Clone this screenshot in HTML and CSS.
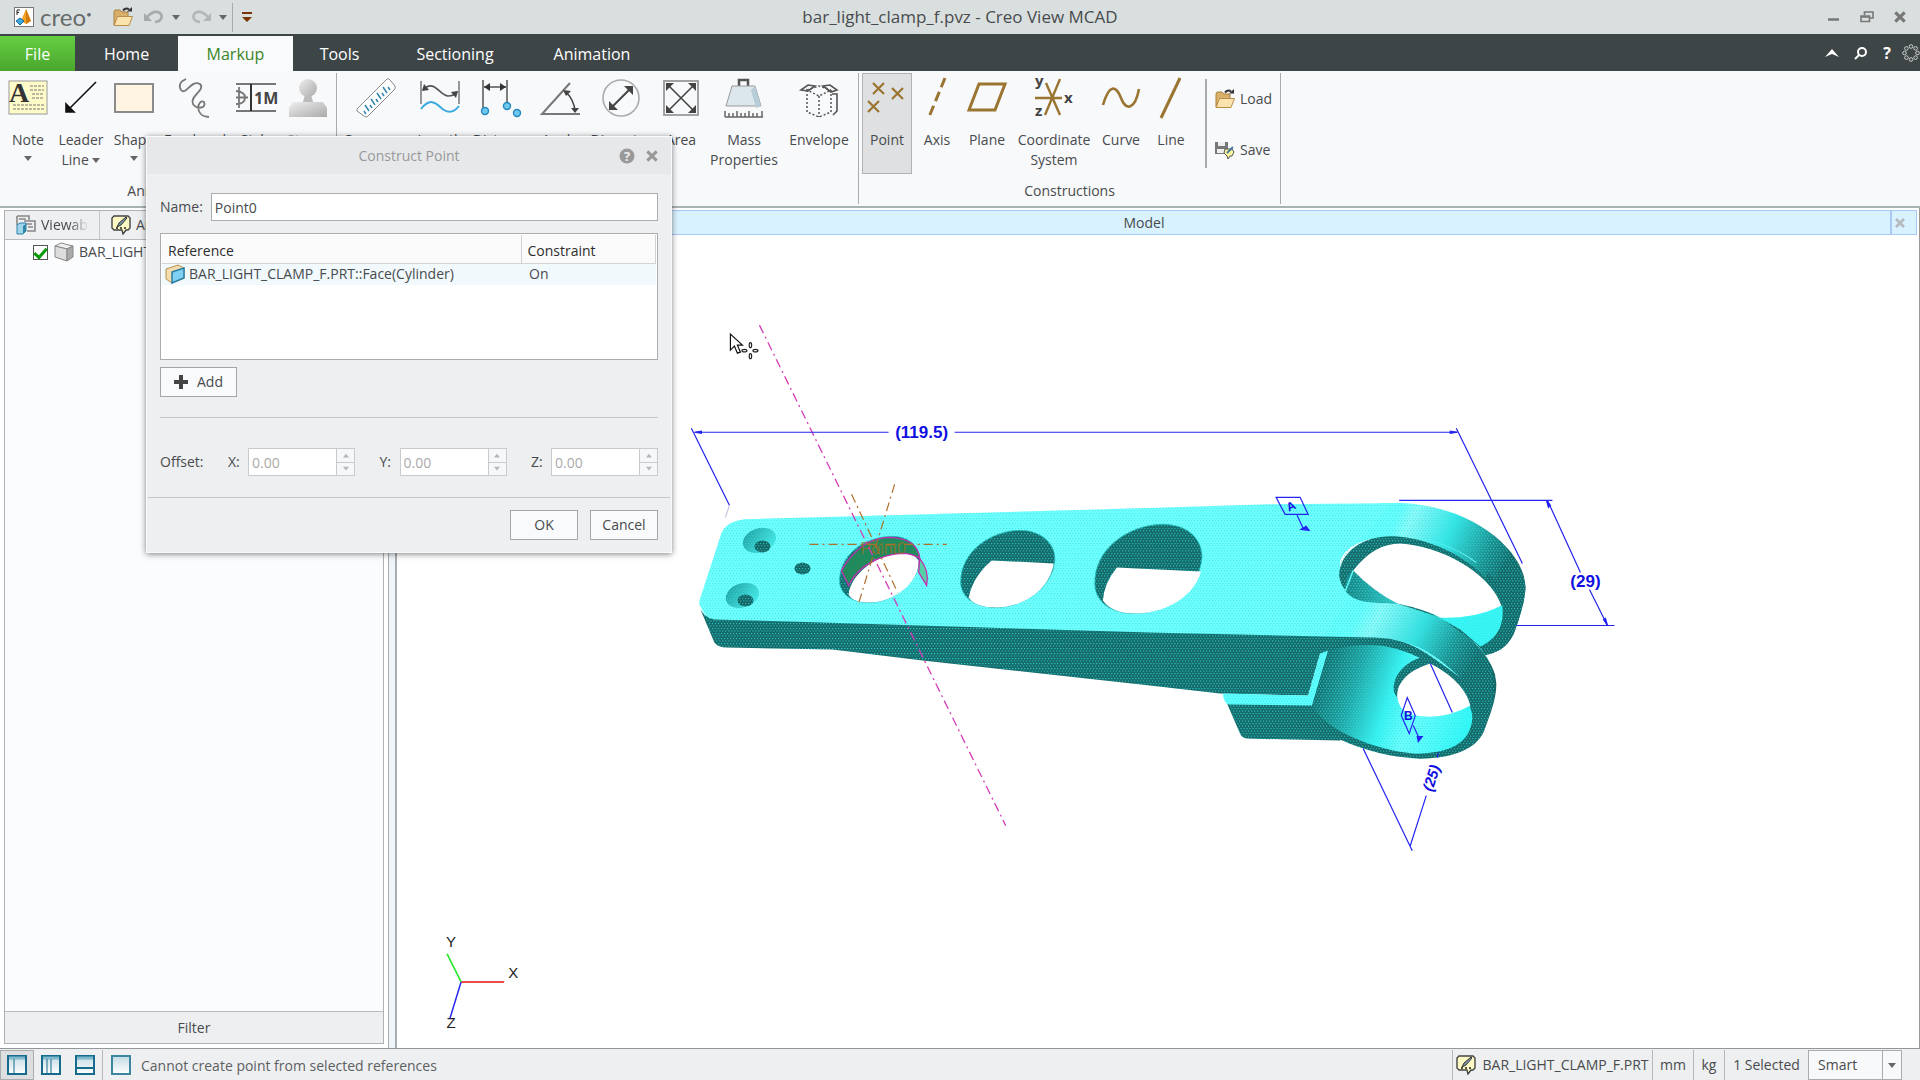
FILE: index.html
```html
<!DOCTYPE html>
<html lang="en">
<head>
<meta charset="utf-8">
<title>bar_light_clamp_f.pvz - Creo View MCAD</title>
<link rel="stylesheet" href="styles.css">
</head>
<body>
<svg class="defs" aria-hidden="true">
  <symbol id="i-folder" viewBox="0 0 20 20">
    <path d="M1 18V5l1-2h5l2 2h6v4" fill="#d9b06a" stroke="#a9803f"/>
    <path d="M1 18.500L4.500 9.500H19.500L16 18.500Z" fill="#fbe3ae" stroke="#b98c48"/>
    <path d="M10 3.500Q13 0 16 2.500" fill="none" stroke="#333" stroke-width="2"/><path d="M14 4.500H19V0Z" fill="#333"/>
  </symbol>
  <symbol id="i-note" viewBox="0 0 20 20">
    <path d="M3 1h14l2 2v10l-2 2h-2l-3 4-1-4H3l-2-2V3z" fill="#fdf9c4" stroke="#444" stroke-width="1.400"/>
    <path d="M6 12l2-4 7-6 1 1-6 7z" fill="#7d95a5" stroke="#333"/><path d="M5 13h2M9 13h2M13 13h2" stroke="#222" stroke-width="1.500"/>
  </symbol>
  <symbol id="i-x" viewBox="0 0 12 12"><path d="M2 2l8 8M10 2l-8 8" stroke="currentColor" stroke-width="2.600" fill="none"/></symbol>
  <symbol id="i-down" viewBox="0 0 8 5"><path d="M0 0h8L4 5z" fill="currentColor"/></symbol>
  <symbol id="i-up" viewBox="0 0 8 5"><path d="M0 5h8L4 0z" fill="currentColor"/></symbol>
  <linearGradient id="paneFill" x2="0" y2="1"><stop offset="0" stop-color="#c3dbe4"/><stop offset="1" stop-color="#fff"/></linearGradient>
  <linearGradient id="gray" x2="1" y2="1"><stop offset="0" stop-color="#eee"/><stop offset="1" stop-color="#aaa"/></linearGradient>
</svg>

<header class="titlebar">
  <svg class="logo" viewBox="0 0 20 20"><rect x=".500" y=".500" width="19" height="19" fill="#fff" stroke="#777"/><path d="M12 2L7 14l5 3 5-3z" fill="#f4a020"/><path d="M12 2v15l5-3z" fill="#d47a0c"/><path d="M6 11l4 3-4 4-4-4z" fill="#3aa7e0" stroke="#17699b"/><path d="M3 3v5M3 3h3M3 5.500h2" stroke="#222"/></svg>
  <span class="brand">creo<sup>•</sup></span>
  <button class="tb open" aria-label="Open"><svg class="ic20"><use href="#i-folder"/></svg></button>
  <button class="tb undo" aria-label="Undo"><svg class="ic20" viewBox="0 0 20 20"><path d="M3 10Q8 4 14 5Q19 7 17 12Q15 15 11 15" fill="none" stroke="#a6aaaa" stroke-width="2.600"/><path d="M0 6v8h8z" fill="#a6aaaa"/></svg></button>
  <svg class="caret"><use href="#i-down"/></svg>
  <button class="tb redo" aria-label="Redo"><svg class="ic20" viewBox="0 0 20 20"><path d="M17 10Q12 4 6 5Q1 7 3 12Q5 15 9 15" fill="none" stroke="#b2b7b7" stroke-width="2.600"/><path d="M20 6v8h-8z" fill="#b2b7b7"/></svg></button>
  <svg class="caret"><use href="#i-down"/></svg>
  <span class="tsep"></span>
  <button class="tb custom" aria-label="Customize toolbar"><svg width="10" height="10" viewBox="0 0 10 10"><path d="M0 0h10v2H0zM0 5h10L5 10z" fill="#7a3508"/></svg></button>
  <h1 class="title">bar_light_clamp_f.pvz - Creo View MCAD</h1>
  <div class="winbtns">
    <button aria-label="Minimize"><svg width="14" height="14"><path d="M1 9.500h11" stroke="#777" stroke-width="2.500"/></svg></button>
    <button aria-label="Restore"><svg width="14" height="14" fill="none" stroke="#777" stroke-width="1.600"><path d="M4.500 5V2h8.500v6H10M1 6h8.500v5.500H1zM1 7h8.500"/></svg></button>
    <button aria-label="Close"><svg width="14" height="14" class="gx"><use href="#i-x"/></svg></button>
  </div>
</header>

<nav class="tabs">
  <a class="file" href="#">File</a><a class="home" href="#">Home</a><a class="on" href="#">Markup</a><a class="t4" href="#">Tools</a><a class="t5" href="#">Sectioning</a><a class="t6" href="#">Animation</a>
  <div class="navicons">
    <button aria-label="Collapse ribbon"><svg width="14" height="8"><path d="M0 8L7 0l7 8-7-3z" fill="#fff"/></svg></button>
    <button aria-label="Search"><svg width="14" height="14" fill="none" stroke="#fff" stroke-width="2"><circle cx="8" cy="6" r="4"/><path d="M5 9l-4 4"/></svg></button>
    <button aria-label="Help" class="q">?</button>
    <button aria-label="Account"><svg width="18" height="18" fill="none" stroke="#ccc" stroke-width="1"><circle cx="9" cy="2.500" r="1.800"/><circle cx="13.600" cy="4.400" r="1.800"/><circle cx="15.500" cy="9" r="1.800"/><circle cx="13.600" cy="13.600" r="1.800"/><circle cx="9" cy="15.500" r="1.800"/><circle cx="4.400" cy="13.600" r="1.800"/><circle cx="2.500" cy="9" r="1.800"/><circle cx="4.400" cy="4.400" r="1.800"/></svg></button>
  </div>
</nav>

<section class="ribbon">
  <div class="group g1">
    <div class="items">
      <button class="rb w54"><svg viewBox="0 0 40 40"><rect x="1" y="3" width="38" height="33" fill="#fffbc8" stroke="#999"/><text x="1" y="24" class="bigA">A</text><path d="M22 8h14M22 12h14M24 16h12M24 20h12M5 27h31M5 31h31" stroke="#777" stroke-dasharray="3 1"/></svg><span>Note</span><svg class="caret"><use href="#i-down"/></svg></button>
      <button class="rb w52"><svg viewBox="0 0 40 40" stroke="#111" stroke-width="1.600"><path d="M35 4L6 33" fill="none"/><path d="M5 34V26L13 34z" fill="#111"/></svg><span>Leader<br>Line <svg class="caret"><use href="#i-down"/></svg></span></button>
      <button class="rb w54"><svg viewBox="0 0 40 40"><rect x="1" y="6" width="38" height="28" fill="#fff3e2" stroke="#8b8b8b" stroke-width="2"/></svg><span>Shape</span><svg class="caret"><use href="#i-down"/></svg></button>
      <button class="rb w68"><svg viewBox="0 0 40 40" fill="none" stroke="#777" stroke-width="1.800"><path d="M11 1Q2 5 6 12C11 18 16 1 25 6C31 12 14 18 18 26C22 32 32 30 29 24C23 20 18 38 34 39"/></svg><span>Freehand<br>Line</span></button>
      <button class="rb w54"><svg viewBox="0 0 40 40" fill="none" stroke="#777"><path d="M0 6h40M0 33h40" stroke-width="2"/><path d="M15 6v27" stroke="#333" stroke-width="2"/><path d="M3 9v21M0 19.500h12M0 13Q9 14 9 19.500Q9 26 0 26" stroke-width="1.800"/><text x="18" y="26" class="onem">1M</text></svg><span>Style</span></button>
      <button class="rb w50 off"><svg viewBox="0 0 40 40"><circle cx="20" cy="10" r="9" fill="url(#gray)"/><path d="M17 17h6l3 10H14z" fill="#bbb"/><path d="M5 24h30l4 6v9H1V30z" fill="url(#gray)"/></svg><span>Stamp</span></button>
    </div>
    <div class="cap">Annotations</div>
  </div>
  <div class="group g2">
    <div class="items">
      <button class="rb w68"><svg viewBox="0 0 40 40"><path d="M1 31L31 1Q33 0 34 2L39 8Q40 10 38 12L12 38Q10 40 8 38L1 33z" fill="#fff" stroke="#888"/><path d="M10 36l-2-3M13 33l-4-6M16 30l-2-3M19 27l-4-6M22 24l-2-3M25 21l-4-6M28 18l-2-3M31 15l-4-6M34 12l-2-3" stroke="#3286ad" stroke-width="1.500"/></svg><span>Summary</span></button>
      <button class="rb w60"><svg viewBox="0 0 40 40" fill="none"><path d="M1 3v23M39 3v23" stroke="#777" stroke-width="1.500"/><path d="M3 12C14 0 20 18 28 18Q34 18 37 14" stroke="#555" stroke-width="1.600"/><path d="M2 13l2-7 5 6zM38 13l-2 7-5-6z" fill="#444"/><path d="M1 31C12 17 18 28 24 32Q32 37 39 28" stroke="#39a9e0" stroke-width="2"/></svg><span>Length</span></button>
      <button class="rb w62"><svg viewBox="0 0 40 40" fill="none"><path d="M2 2v28M26 2v22M3 9h22" stroke="#555" stroke-width="1.500"/><path d="M3 9l6-4v8zM25 9l-6-4v8z" fill="#333"/><g fill="#6fc9ef" stroke="#2389bd" stroke-width="1.400"><circle cx="4" cy="33" r="3.500"/><circle cx="26" cy="28" r="3.500"/><circle cx="36" cy="35" r="3.500"/></g></svg><span>Distance</span></button>
      <button class="rb w56"><svg viewBox="0 0 40 40" fill="none" stroke="#777" stroke-width="2"><path d="M30 5L2 36H40"/><path d="M26 14Q34 22 35 33" stroke="#444" stroke-width="1.600"/><path d="M23 12l8 1-5 5zM31 30h8l-4 5z" fill="#444" stroke="none"/></svg><span>Angle</span></button>
      <button class="rb w66"><svg viewBox="0 0 40 40"><circle cx="20" cy="20" r="18" fill="none" stroke="#aaa" stroke-width="1.600"/><path d="M11 29L29 11" stroke="#444" stroke-width="2"/><path d="M8 32v-9l9 9zM32 8v9l-9-9z" fill="#444"/></svg><span>Diameter</span></button>
      <button class="rb w54"><svg viewBox="0 0 40 40"><rect x="3" y="3" width="34" height="34" fill="none" stroke="#999" stroke-width="1.800"/><path d="M6 6l28 28M34 6L6 34" stroke="#444" stroke-width="1.600"/><path d="M5 5h8l-8 8zM35 5v8l-8-8zM5 35v-8l8 8zM35 35h-8l8-8z" fill="#444"/></svg><span>Area</span></button>
      <button class="rb w72"><svg viewBox="0 0 40 40"><path d="M15 8V2h9v6" fill="none" stroke="#555" stroke-width="2.500"/><path d="M8 8h23l6 20H2z" fill="#dbe7ed" stroke="#999"/><path d="M31 8l6 20-5 2-5-18z" fill="#b6cdd8"/><path d="M1 39h38M1 39v-6M5 39v-4M9 39v-4M13 39v-6M17 39v-4M21 39v-4M25 39v-6M29 39v-4M33 39v-4M38 39v-6" stroke="#666" stroke-width="1.500" fill="none"/></svg><span>Mass<br>Properties</span></button>
      <button class="rb w76"><svg viewBox="0 0 40 40" fill="none" stroke="#555"><path d="M8 12v22l12 5 12-5V12L20 18zM20 18v21M8 12l12-4 12 4" stroke-width="1.500" stroke-dasharray="2 2"/><path d="M2 12l7-5 7 1-7 5zM24 8l7-1 7 5-6 2zM33 16h5v17l-4 4" stroke-width="1.600"/></svg><span>Envelope</span></button>
    </div>
    <div class="cap">Measure</div>
  </div>
  <div class="group g3">
    <div class="items">
      <button class="rb w50 pressed"><svg viewBox="0 0 40 40" stroke="#9a7431" stroke-width="2.200"><path d="M6 5l11 11M17 5L6 16M25 10l11 11M36 10L25 21M1 23l11 11M12 23L1 34"/></svg><span>Point</span></button>
      <button class="rb w50"><svg viewBox="0 0 40 40"><path d="M28 0L12 39" stroke="#9a7431" stroke-width="3" stroke-dasharray="10 5"/></svg><span>Axis</span></button>
      <button class="rb w50"><svg viewBox="0 0 40 40"><path d="M12 6h26L28 32H2z" fill="none" stroke="#9a7431" stroke-width="3"/></svg><span>Plane</span></button>
      <button class="rb w84"><svg viewBox="0 0 40 40"><path d="M1 20h27M12 5l14 32M26 1L11 37" stroke="#9a7431" stroke-width="2.400"/><text x="1" y="8" class="axl">y</text><text x="30" y="25" class="axl">x</text><text x="1" y="38" class="axl">z</text></svg><span>Coordinate<br>System</span></button>
      <button class="rb w50"><svg viewBox="0 0 40 40"><path d="M2 27C8 6 15 7 20 20S34 32 38 11" fill="none" stroke="#9a7431" stroke-width="2.600"/></svg><span>Curve</span></button>
      <button class="rb w50"><svg viewBox="0 0 40 40"><path d="M29 0L10 40" stroke="#9a7431" stroke-width="3"/></svg><span>Line</span></button>
      <div class="side">
        <button><svg class="ic20"><use href="#i-folder"/></svg>Load</button>
        <button><svg class="ic20" viewBox="0 0 20 20"><path d="M0 2h13v12H0z" fill="#777"/><path d="M3 2h7v4H3zM2 9h9v4H2z" fill="#eee"/><path d="M10 9h7l2 3-2 4h-2l-2 3-1-3-3-3z" fill="#fbf5a0" stroke="#555"/><path d="M12 13l6-6" stroke="#4a7a99" stroke-width="2"/></svg>Save</button>
      </div>
    </div>
    <div class="cap">Constructions</div>
  </div>
</section>

<main class="work">
  <aside class="panel">
    <div class="ptabs">
      <button class="pt"><svg class="ic20" viewBox="0 0 20 20"><path d="M1 1h12v4M1 1v9M3 4h7M8 6h11v10h-8M10 9h6M12 12h5" fill="none" stroke="#888" stroke-width="1.600"/><path d="M1 10l3-2h6v8l-3 3H1z" fill="#9fd4ea" stroke="#2a83a8"/><path d="M7 11l3-2v7l-3 3z" fill="#2e86ab"/></svg><span class="fade">Viewables</span></button>
      <button class="pt"><svg class="ic20"><use href="#i-note"/></svg><span>Annotations</span></button>
    </div>
    <div class="tree">
      <label class="node"><input type="checkbox" checked><svg class="ic20" viewBox="0 0 20 20"><path d="M1 4l6-3 12 3-6 3z" fill="#eee" stroke="#888"/><path d="M1 4l12 3v12L1 15z" fill="#ddd" stroke="#888"/><path d="M13 7l6-3v11l-6 4z" fill="#aaa" stroke="#888"/></svg>BAR_LIGHT_CLAMP_F.PRT</label>
    </div>
    <button class="filter">Filter</button>
  </aside>
  <div class="split"></div>
  <section class="view">
    <div class="vhead"><h2>Model</h2><button aria-label="Close view"><svg width="12" height="12"><use href="#i-x"/></svg></button></div>
    <svg class="scene" viewBox="398 235 1521 812" preserveAspectRatio="xMinYMin slice" role="img" aria-label="Clamp part model">
      <defs>
        <pattern id="dots" width="3" height="5" patternUnits="userSpaceOnUse"><path d="M0 0h1v1H0zM1.500 2.500h1v1h-1z" fill="#35dede"/></pattern>
        <linearGradient id="back" gradientUnits="userSpaceOnUse" x1="1395" y1="520" x2="1505" y2="570"><stop offset="0" stop-color="#68ffff"/><stop offset=".120" stop-color="#90fafa"/><stop offset=".450" stop-color="#35e6e6"/><stop offset=".800" stop-color="#1c9090"/><stop offset="1" stop-color="#146868"/></linearGradient>
        <linearGradient id="front" gradientUnits="userSpaceOnUse" x1="1360" y1="610" x2="1470" y2="668"><stop offset="0" stop-color="#68ffff"/><stop offset=".150" stop-color="#90fafa"/><stop offset=".500" stop-color="#35e0e0"/><stop offset=".800" stop-color="#1c9090"/><stop offset="1" stop-color="#146868"/></linearGradient>
        <linearGradient id="bore" gradientUnits="userSpaceOnUse" x1="1325" y1="670" x2="1472" y2="720"><stop offset="0" stop-color="#157070"/><stop offset=".200" stop-color="#1fa0a0"/><stop offset=".450" stop-color="#38f4f4"/><stop offset=".620" stop-color="#70ffff"/><stop offset="1" stop-color="#30f8f8"/></linearGradient>
        <linearGradient id="inner" x2="1"><stop offset="0" stop-color="#158080"/><stop offset="1" stop-color="#30c8c8"/></linearGradient>
        <linearGradient id="sink" x2="1" y2="1"><stop offset="0" stop-color="#1c9a9a"/><stop offset="1" stop-color="#50f4f4"/></linearGradient>
        <linearGradient id="edge" gradientUnits="userSpaceOnUse" x1="0" y1="618" x2="2" y2="650"><stop offset="0" stop-color="#40d8d8"/><stop offset=".350" stop-color="#156a6a"/></linearGradient>
      </defs>
      <path d="M1380 503H1400C1470 504 1525 550 1525 587C1525 600 1517 624 1513 634C1507 645 1500 652 1482 655L1350 620Z" fill="url(#back)"/>
      <path d="M1503 555C1520 568 1525 580 1525 587C1525 600 1517 624 1513 634C1507 645 1500 652 1482 655L1470 640 1490 560Z" fill="#146868"/>
      <path d="M1227 703L1240 733Q1242 738 1248 738L1340 740 1370 700Z" fill="#156a6a"/>
      <path d="M1323 636L1400 603C1430 608 1445 620 1460 629C1482 646 1496 668 1496 684C1496 700 1488 718 1484 730C1475 752 1445 758 1420 758C1390 757 1365 750 1340 739L1312 705Z" fill="#146868"/>
      <path d="M700 604L710 622 823 630 1323 642 1380 638C1410 638 1430 655 1460 677L1490 665C1480 640 1450 614 1397 603L1380 595 1340 575V560Q1350 538 1390 536Q1440 536 1475 562L1505 560C1480 525 1430 503 1395 503L1270 504 1140 508 745 519Q727 521 722 533L700 600Z" fill="#70ffff"/>
      <path d="M1390 503H1400C1450 504 1490 530 1508 554L1495 580C1475 555 1440 536 1390 536Q1370 536 1358 543Z" fill="url(#back)"/>
      <path d="M1350 595L1397 603C1450 614 1485 644 1495 675L1485 700C1450 670 1430 640 1380 638L1323 637Z" fill="url(#front)"/>
      <path d="M699 604L715 642Q719 647 727 647L833 649 923 660 1150 685 1220 693 1308 695 1320 653 1328 650Q1353 643 1380 645L1430 662C1410 640 1390 637 1370 637L1323 636 1150 632 823 622 715 619Q703 617 699 604Z" fill="url(#edge)"/>
      <path d="M1320 653L1328 650 1312 705 1228 704Q1223 701 1223 693L1308 695Z" fill="#60ffff"/>
      <path d="M1328 650Q1353 643 1380 645C1430 652 1471 690 1472 717C1471 742 1450 753 1415 753C1375 750 1325 730 1312 705Z" fill="url(#bore)"/>
      <path d="M1420 657C1400 664 1391 680 1394 692L1402 706 1440 680 1432 662Z" fill="#156a6a"/>
      <path d="M1430 663C1405 671 1396 684 1397 697Q1399 708 1407 713Q1440 722 1470 705C1466 688 1450 673 1430 663Z" fill="#fff"/>
      <path d="M1339 575C1340 550 1365 536 1390 536C1440 536 1503 575 1502 616C1501 632 1493 641 1480 646L1440 617 1397 603C1370 602 1342 600 1339 575Z" fill="#156a6a"/>
      <path d="M1353 570C1345 577 1344 582 1345 590Q1352 601 1373 602L1397 603 1373 588Z" fill="url(#inner)"/>
      <path d="M1353 570L1345 591" stroke="#68ffff" stroke-width="1.500"/>
      <path d="M1502 605C1504 625 1497 638 1480 646L1460 629 1430 612Z" fill="#38f6f6"/>
      <path d="M1353 570C1367 552 1382 543 1400 543C1440 545 1490 572 1501 605C1480 616 1455 618 1440 617Q1425 609 1397 603Q1372 590 1353 570Z" fill="#fff"/>
      <g fill="#156a6a" stroke="#24b8b8" stroke-width=".800">
        <path d="M840 580C841 550 870 536 893 536C912 536 922 550 920 562C917 583 893 602 870 602C850 602 840 592 840 580Z"/>
        <path d="M961 583C960 550 993 530 1020 530C1042 530 1056 544 1055 560C1052 590 1020 607 997 607C975 607 962 597 961 583Z"/>
        <path d="M1095 585C1093 548 1130 524 1163 524C1187 524 1202 538 1202 557C1199 593 1162 613 1135 613C1112 613 1096 602 1095 585Z"/>
      </g>
      <g fill="#fff">
        <path d="M849 594C852 572 880 552 904 553Q915 553 919 560C920 583 893 602 870 602Q853 602 849 594Z"/>
        <path d="M992 560L1054 563C1049 592 1020 607 997 607Q975 607 969 597Q973 576 992 560Z"/>
        <path d="M1117 567L1201 571C1193 600 1160 613 1135 613Q1112 613 1103 600Q1104 583 1117 567Z"/>
      </g>
      <ellipse cx="760" cy="540" rx="17" ry="12" fill="url(#sink)" transform="rotate(-18 760 540)"/>
      <ellipse cx="743" cy="595" rx="17" ry="12" fill="url(#sink)" transform="rotate(-18 743 595)"/>
      <g fill="#146464"><ellipse cx="763" cy="546" rx="8" ry="6"/><ellipse cx="746" cy="600" rx="8" ry="6"/><ellipse cx="803" cy="568" rx="8" ry="6"/></g>
      <path fill="url(#dots)" fill-rule="evenodd" d="M700 604L715 642Q719 647 727 647L833 649 1223 693 1240 733Q1242 738 1248 738L1340 740C1365 750 1390 758 1420 758C1445 758 1475 752 1484 730C1492 705 1500 690 1487 655C1500 652 1510 640 1513 634C1522 610 1526 595 1525 587C1523 545 1460 503 1395 503L1270 504 745 519Q727 521 722 533Z
        M849 594C852 572 880 552 904 553Q915 553 919 560C920 583 893 602 870 602Q853 602 849 594Z M992 560L1054 563C1049 592 1020 607 997 607Q975 607 969 597Q973 576 992 560Z M1117 567L1201 571C1193 600 1160 613 1135 613Q1112 613 1103 600Q1104 583 1117 567Z
        M1353 570C1367 552 1382 543 1400 543C1440 545 1490 572 1501 605C1480 616 1455 618 1440 617Q1425 609 1397 603Q1372 590 1353 570Z M1430 663C1405 671 1396 684 1397 697Q1399 708 1407 713Q1440 722 1470 705C1466 688 1450 673 1430 663Z"/>
      <g stroke="#c32fb0" stroke-width="1.300">
        <path d="M842 570C856 545 875 537 890 537Q918 538 920 558Q912 553 903 553C880 554 858 566 849 585Z" fill="#218a5c"/>
        <path d="M920 558Q930 570 927 585L919 572Z" fill="#55cfa5"/>
      </g>
      <g fill="none" stroke="#b0702c" stroke-width="1.200" stroke-dasharray="9 4 2 4"><path d="M852 494L898 592M895 484L859 603M810 544H947"/></g>
      <text x="861" y="554" class="pt0">Point0</text>
      <path d="M760 325L1006 825" fill="none" stroke="#d43cb8" stroke-width="1.300" stroke-dasharray="9 4 2 4"/>
      <g fill="none" stroke="#2424f0" stroke-width="1.200">
        <path d="M696 432H889M955 432H1457M692 428L730 505M1456 428L1522 563M1399 500H1552M1547 500L1580 572M1589 589L1607 625M1516 625H1614M1363 748L1412 850M1410 845L1426 795M1437 757L1438 752M1430 663L1452 712"/>
        <path d="M1276 497H1300L1308 514H1285ZM1297 515L1303 528M1407 697L1415 715 1409 733 1401 715ZM1413 725L1419 738"/>
        <path d="M1301 529l5-3 3 4zM1417 736l5 0-4 5zM695 432l7-1v2zM1457 432l-7-1v2zM1546 500l4 5-2 2zM1607 625l-4-6 2-1z" fill="#2424f0"/>
      </g>
      <g class="dim" text-anchor="middle">
        <text x="922" y="438">(119.5)</text><text x="1585" y="587">(29)</text>
        <text class="tilt" transform="translate(1436 779) rotate(-72)">(25)</text>
        <text class="small" transform="translate(1289 509) rotate(-25)" x="3" y="2">A</text><text class="small" x="1408" y="719">B</text>
      </g>
      <path d="M730 505l-4 12" stroke="#c8b8d8"/>
      <path d="M731 334V350L735 346 738 353 741 352 738 345H743Z" fill="#fff" stroke="#111" stroke-width="1.200"/>
      <g fill="none" stroke="#222" stroke-width="1.200"><ellipse cx="751" cy="345" rx="1.200" ry="2.500"/><ellipse cx="751" cy="356" rx="1.200" ry="2.500"/><ellipse cx="745" cy="350.500" rx="2.500" ry="1.200"/><ellipse cx="756" cy="350.500" rx="2.500" ry="1.200"/></g>
      <g fill="none" stroke-width="1.500"><path d="M462 981H505" stroke="#e81010"/><path d="M462 981L448 953" stroke="#20e820"/><path d="M462 981L451 1017" stroke="#2828f0"/></g>
      <g class="ax" text-anchor="middle"><text x="452" y="946">Y</text><text x="514" y="977">X</text><text x="452" y="1027">Z</text></g>
    </svg>
  </section>
</main>

<footer class="status">
  <button class="sb on" aria-label="Left layout"><svg class="ic20" viewBox="0 0 20 20"><rect x="1" y="1" width="18" height="18" fill="url(#paneFill)" stroke="#176b8c" stroke-width="2"/><path d="M2 3h16" stroke="#7fb9cd" stroke-width="3"/><path d="M7 4v14" stroke="#176b8c"/></svg></button>
  <button class="sb" aria-label="Columns layout"><svg class="ic20" viewBox="0 0 20 20"><rect x="1" y="1" width="18" height="18" fill="url(#paneFill)" stroke="#176b8c" stroke-width="2"/><path d="M2 3h16" stroke="#7fb9cd" stroke-width="3"/><path d="M6 4v14M10 4v14" stroke="#176b8c"/></svg></button>
  <button class="sb" aria-label="Rows layout"><svg class="ic20" viewBox="0 0 20 20"><rect x="1" y="1" width="18" height="18" fill="url(#paneFill)" stroke="#176b8c" stroke-width="2"/><path d="M2 3h16" stroke="#7fb9cd" stroke-width="3"/><path d="M2 13h16" stroke="#176b8c" stroke-width="2"/></svg></button>
  <button class="sb full" aria-label="Full screen"><svg class="ic20" viewBox="0 0 20 20"><rect x="1" y="1" width="18" height="18" fill="url(#paneFill)" stroke="#3c86a2" stroke-width="2"/></svg></button>
  <p class="msg">Cannot create point from selected references</p>
  <div class="cell part"><svg class="ic20"><use href="#i-note"/></svg>BAR_LIGHT_CLAMP_F.PRT</div>
  <div class="cell mm">mm</div><div class="cell kg">kg</div><div class="cell sel">1 Selected</div>
  <div class="pick"><select aria-label="Selection filter"><option>Smart</option></select><span><svg class="caret"><use href="#i-down"/></svg></span></div>
</footer>

<form class="dialog" role="dialog" aria-labelledby="dlgt">
  <div class="dtitle"><h2 id="dlgt">Construct Point</h2>
    <div class="dbtns"><button type="button" aria-label="Help"><svg width="16" height="16"><circle cx="8" cy="8" r="7.500" fill="#999"/><text x="8" y="13" text-anchor="middle" class="qm">?</text></svg></button><button type="button" aria-label="Close"><svg width="14" height="14"><use href="#i-x"/></svg></button></div>
  </div>
  <div class="dbody">
    <div class="namerow"><label for="nm">Name:</label><input id="nm" type="text" value="Point0"></div>
    <div class="tbox"><table>
      <thead><tr><th class="c1">Reference</th><th>Constraint</th></tr></thead>
      <tbody><tr><td><div class="ref"><svg class="ic20" viewBox="0 0 20 20"><path d="M1 5l12-4 6 3v10L7 19l-6-4z" fill="#f2dcae" stroke="#b98f4c"/><path d="M7 8l12-4v10L7 19z" fill="#7fd0f2" stroke="#2b7ea3" stroke-width="1.500"/></svg>BAR_LIGHT_CLAMP_F.PRT::Face(Cylinder)</div></td><td class="on">On</td></tr></tbody>
    </table></div>
    <button type="button" class="btn add"><svg width="14" height="14"><path d="M7 0v14M0 7h14" stroke="#444" stroke-width="4"/></svg>Add</button>
    <hr>
    <div class="offs"><span class="ol">Offset:</span>
      <label for="ox">X:</label><div class="spin"><input id="ox" type="text" value="0.00" disabled><div><button type="button" disabled aria-label="X up"><svg class="sc"><use href="#i-up"/></svg></button><button type="button" disabled aria-label="X down"><svg class="sc"><use href="#i-down"/></svg></button></div></div>
      <label for="oy">Y:</label><div class="spin"><input id="oy" type="text" value="0.00" disabled><div><button type="button" disabled aria-label="Y up"><svg class="sc"><use href="#i-up"/></svg></button><button type="button" disabled aria-label="Y down"><svg class="sc"><use href="#i-down"/></svg></button></div></div>
      <label for="oz">Z:</label><div class="spin"><input id="oz" type="text" value="0.00" disabled><div><button type="button" disabled aria-label="Z up"><svg class="sc"><use href="#i-up"/></svg></button><button type="button" disabled aria-label="Z down"><svg class="sc"><use href="#i-down"/></svg></button></div></div>
    </div>
  </div>
  <div class="dfoot"><button type="button" class="btn">OK</button><button type="button" class="btn">Cancel</button></div>
</form>
</body>
</html>
```
FILE: styles.css
```css
* { box-sizing: border-box; }
body { margin: 0; min-height: 100vh; display: flex; flex-direction: column; overflow: hidden; background: #fff; color: #484b4d; font: 14px/20px "Open Sans", "Noto Sans", sans-serif; }
button, input, select { font: inherit; color: inherit; }
button { border: 0; padding: 0; background: none; }
h1, h2, p { margin: 0; font-weight: 400; }
svg { display: block; flex: none; }
.defs { position: absolute; width: 0; height: 0; }
.ic20 { width: 20px; height: 20px; }
.caret { width: 8px; height: 5px; color: #666; }

.titlebar { height: 34px; flex: none; display: flex; align-items: center; background: #d9dfdf; padding-left: 14px; position: relative; }
.logo { width: 20px; height: 20px; }
.brand { margin-left: 6px; width: 73px; font: 24px/28px Lato, sans-serif; color: #666b6c; }
.brand sup { font-size: 10px; line-height: 0; vertical-align: 8px; }
.undo { margin-left: 11px; margin-right: 8px; }
.redo { margin-left: 11px; margin-right: 8px; }
.tsep { width: 1px; height: 29px; background: #a5abab; margin-left: 5px; margin-right: 9px; }
.title { position: absolute; left: 0; right: 0; text-align: center; font-size: 17px; line-height: 34px; pointer-events: none; }
.winbtns { margin-left: auto; display: flex; gap: 19px; padding-right: 13px; color: #777; }

.tabs { height: 37px; flex: none; display: flex; align-items: flex-end; background: #3e4547; }
.tabs a { height: 35px; line-height: 37px; text-align: center; color: #fff; text-decoration: none; font-size: 16px; }
.tabs .file { width: 75px; background: linear-gradient(#65cf42, #4aa62d); }
.tabs .home { width: 103px; }
.tabs .on { width: 115px; background: #f9fafb; color: #3b8526; }
.tabs .t4 { width: 93px; }
.tabs .t5 { width: 138px; }
.tabs .t6 { width: 136px; }
.navicons { margin-left: auto; height: 36px; display: flex; align-items: center; gap: 15px; color: #fff; }
.navicons .q { font: 700 16px/20px "Open Sans", sans-serif; }
.navicons .q + button { margin-left: -4px; }

.ribbon { height: 137px; flex: none; display: flex; background: #f8f9fb; border-bottom: 2px solid #a9b3b0; padding-top: 2px; }
.group { display: flex; flex-direction: column; border-right: 1px solid #a9adb0; margin-bottom: 2px; }
.items { display: flex; height: 108px; }
.g1 { padding: 0 3px 0 1px; }
.g2 .items { padding-left: 5px; }
.g3 .items { padding-left: 3px; }
.cap { text-align: center; line-height: 20px; }
.rb { height: 101px; display: flex; flex-direction: column; align-items: center; padding-top: 5px; text-align: center; white-space: nowrap; }
.rb > svg:first-child { width: 40px; height: 40px; margin-bottom: 12px; overflow: visible; }
.rb > span { line-height: 20px; }
.rb > .caret { margin-top: 6px; }
.rb span .caret { display: inline-block; vertical-align: 2px; }
.rb.off { color: #aaa; }
.pressed { background: #dfe0e2; border: 1px solid #b0b2b4; padding-top: 4px; }
.w50 { width: 50px; } .w52 { width: 52px; } .w54 { width: 54px; } .w56 { width: 56px; } .w60 { width: 60px; } .w62 { width: 62px; } .w66 { width: 66px; } .w68 { width: 68px; } .w72 { width: 72px; } .w76 { width: 78px; } .w84 { width: 84px; }
.bigA { font: 700 28px "Liberation Serif", serif; fill: #333; }
.onem { font: 700 16px "Open Sans", sans-serif; fill: #444; stroke: none; }
.axl { font: 700 15px "Open Sans", sans-serif; fill: #444; }
.side { margin: 6px 8px 0 9px; height: 89px; border-left: 2px solid #a9adb0; padding: 10px 0 0 8px; display: flex; flex-direction: column; gap: 31px; }
.side button { display: flex; gap: 5px; height: 20px; align-items: center; }

.work { flex: 1; min-height: 0; display: flex; }
.panel { width: 380px; margin: 2px 4px 4px 4px; border: 1px solid #aeb2b4; display: flex; flex-direction: column; background: #fbfcfd; }
.ptabs { display: flex; height: 29px; background: #eeeff1; border-bottom: 1px solid #b8bbbd; }
.pt { display: flex; align-items: center; gap: 5px; padding-left: 11px; border-right: 1px solid #c5c8ca; }
.pt:first-child { width: 95px; overflow: hidden; }
.fade { width: 48px; overflow: hidden; -webkit-mask-image: linear-gradient(90deg, #000 60%, transparent); mask-image: linear-gradient(90deg, #000 60%, transparent); }
.tree { flex: 1; padding: 2px 0 0 28px; }
.node { display: flex; align-items: center; height: 20px; }
.node input { appearance: none; width: 15px; height: 15px; margin: 0 6px 0 0; border: 1px solid #555; background: #fff; display: grid; place-items: center; }
.node input:checked::before { content: ""; width: 10px; height: 5px; border-left: 3px solid #0a9a0a; border-bottom: 3px solid #0a9a0a; transform: rotate(-48deg); }
.node svg { margin-right: 5px; }
.filter { height: 32px; background: #eeeff1; border-top: 1px solid #b8bbbd; }
.split { width: 9px; background: #eef5fb; border-left: 1px solid #aaa; border-right: 2px solid #a9adb0; }
.view { flex: 1; min-width: 0; display: flex; flex-direction: column; background: #fff; border-right: 1px solid #999; }
.vhead { margin: 2px 2px 0 0; height: 25px; display: flex; border: 1px solid #a8c8f5; background: #d9f2ff; }
.vhead h2 { flex: 1; font-size: 14px; line-height: 24px; text-align: center; }
.vhead button { width: 26px; border-left: 2px solid #a8c8f5; padding-left: 2px; color: #b4b9bd; }
.scene { flex: 1; width: 100%; min-height: 0; }
.dim { font: 700 17px "Liberation Sans", sans-serif; fill: #1010e0; }
.dim .small { font-size: 12px; }
.dim .tilt { font-size: 15px; font-style: italic; }
.ax { font: 15px "Liberation Sans", sans-serif; fill: #222; }
.pt0 { font: 16px "Liberation Sans", sans-serif; fill: #9c6f1c; fill-opacity: .7; }

.status { height: 32px; flex: none; display: flex; align-items: stretch; background: #eeeff1; border-top: 1px solid #94979a; padding-top: 1px; }
.sb { width: 34px; display: flex; align-items: center; justify-content: center; }
.sb.on { background: #dcdee0; border: 1px solid #aaadaf; }
.full { border-left: 1px solid #b5b8ba; padding-left: 8px; justify-content: flex-start; }
.msg { line-height: 32px; margin-left: 5px; color: #5c5f61; }
.status .cell { border-left: 1px solid #b5b8ba; display: flex; align-items: center; justify-content: center; gap: 6px; }
.status .part { margin-left: auto; width: 200px; }
.mm { width: 41px; } .kg { width: 31px; } .sel { width: 84px; }
.pick { width: 94px; margin-right: 18px; position: relative; border: 1px solid #aaadaf; background: #f8f9fa; }
.pick select { appearance: none; border: 0; background: none; width: 100%; height: 100%; padding: 0 9px; }
.pick span { position: absolute; right: 0; top: 0; bottom: 0; width: 19px; border-left: 1px solid #aaadaf; display: grid; place-items: center; pointer-events: none; }

.dialog { position: absolute; left: 146px; top: 136px; width: 526px; background: #eeeff1; border: 1px solid #fafafa; box-shadow: 0 1px 6px rgba(0, 0, 0, .5); }
.dtitle { height: 37px; background: #e7e8ea; display: flex; align-items: center; position: relative; color: #999; }
.dtitle h2 { flex: 1; text-align: center; font-size: 14px; }
.dbtns { position: absolute; right: 12px; display: flex; gap: 10px; align-items: center; }
.qm { font: 700 13px "Open Sans", sans-serif; fill: #eee; }
.dbody { padding: 19px 13px 21px; }
.dialog input { border: 1px solid #aaadaf; background: #fff; padding: 0 3px; height: 28px; min-width: 0; }
.namerow { display: flex; align-items: center; gap: 8px; }
.namerow input { flex: 1; }
.tbox { margin-top: 12px; height: 127px; border: 1px solid #aaadaf; background: #fff; padding: 1px; }
table { width: 100%; border-collapse: collapse; table-layout: fixed; }
th { height: 28px; padding: 5px 6px 0; text-align: left; font-weight: 400; background: #fafafa; color: #2e2e2e; border-bottom: 1px solid #d0d5d8; border-right: 1px solid #d0d2d4; }
.c1 { width: 359px; }
td { padding: 0; height: 22px; background: #f1f9fd; }
.ref { display: flex; align-items: center; gap: 4px; padding-left: 3px; white-space: nowrap; }
td.on { padding-left: 8px; }
.btn { height: 30px; width: 68px; border: 1px solid #a3a6a8; background: #f9fafb; }
.add { width: 77px; margin-top: 7px; display: flex; align-items: center; justify-content: center; gap: 9px; }
hr { margin: 20px 0 30px; border: 0; border-top: 1px solid #c3c5c7; }
.offs { display: flex; align-items: center; }
.ol { width: 68px; }
.offs label { width: 20px; }
.spin { display: flex; width: 107px; margin-right: auto; }
.spin:last-child { margin-right: 0; }
.spin input { width: 89px; color: #aaa; border-color: #c8cacc; }
.spin > div { width: 18px; display: flex; flex-direction: column; border: 1px solid #c8cacc; border-left: 0; background: #f6f7f8; }
.spin button { flex: 1; display: grid; place-items: center; color: #b5b5b5; }
.spin button + button { border-top: 1px solid #c8cacc; }
.sc { width: 6px; height: 5px; }
.dfoot { border-top: 1px solid #c3c5c7; height: 55px; margin: 0 1px; padding: 12px 12px 0; display: flex; justify-content: flex-end; gap: 12px; }
```
